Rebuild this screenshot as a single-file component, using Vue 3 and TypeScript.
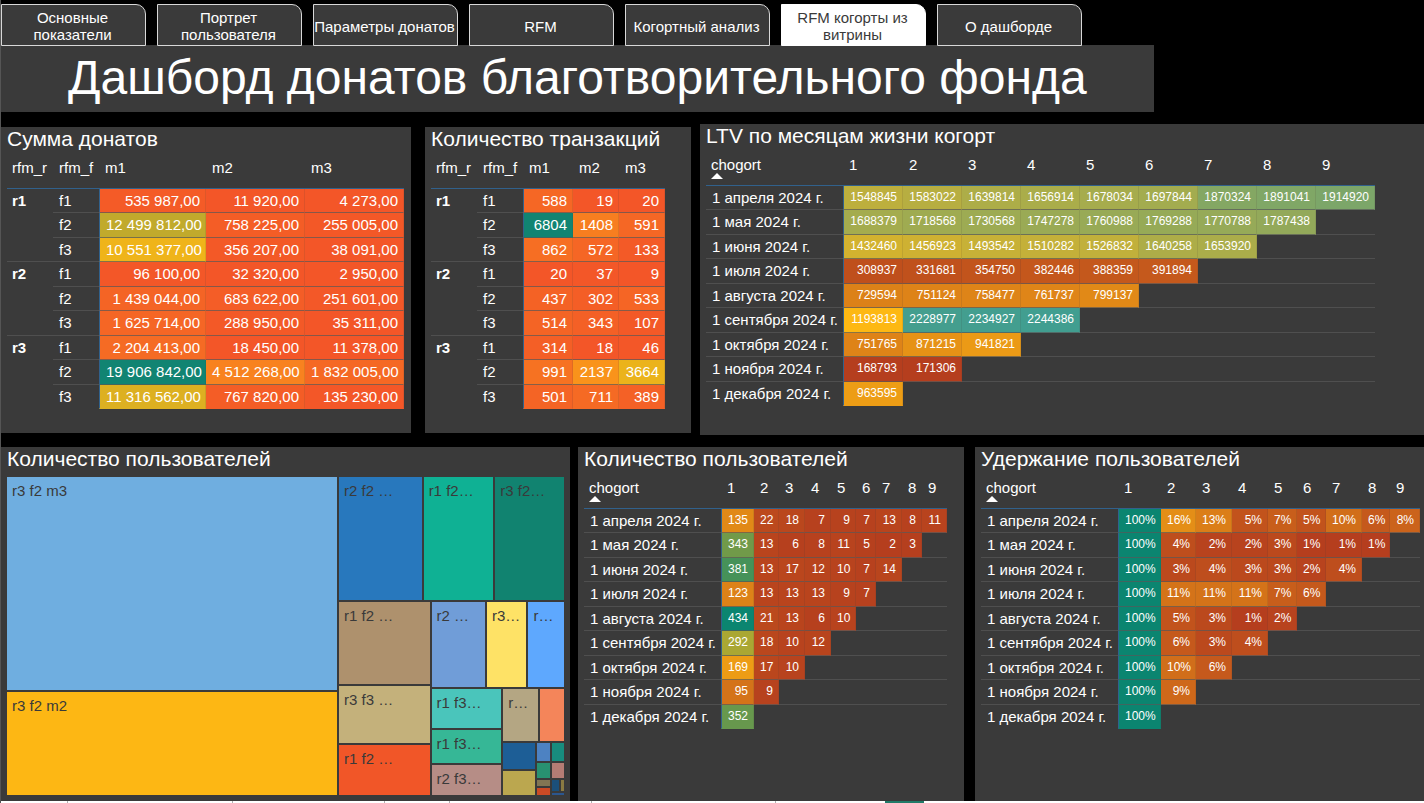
<script setup lang="ts">
import { h, type VNode } from 'vue'

type Rgb = [number, number, number]

interface Scale {
  min: number
  mid: number
  max: number
  low: Rgb
  center: Rgb
  high: Rgb
}

interface Matrix {
  title: string
  columns: string[]
  widths: number[]
  groups: { name: string; rows: { name: string; values: number[] }[] }[]
  scale: Scale
  digits: number
}

interface Cohort {
  id: string
  title: string
  widths: number[]
  rows: number[][]
  scale: Scale
  suffix: string
}

interface Tile {
  size: number
  color?: string
  label?: string
  dir?: 'row' | 'column'
  items?: Tile[]
}

const tabs = [
  'Основные показатели',
  'Портрет пользователя',
  'Параметры донатов',
  'RFM',
  'Когортный анализ',
  'RFM когорты из витрины',
  'О дашборде',
]
const activeTab = 5

const months = [
  '1 апреля 2024 г.',
  '1 мая 2024 г.',
  '1 июня 2024 г.',
  '1 июля 2024 г.',
  '1 августа 2024 г.',
  '1 сентября 2024 г.',
  '1 октября 2024 г.',
  '1 ноября 2024 г.',
  '1 декабря 2024 г.',
]

function group(name: string, f1: number[], f2: number[], f3: number[]) {
  return {
    name,
    rows: [
      { name: 'f1', values: f1 },
      { name: 'f2', values: f2 },
      { name: 'f3', values: f3 },
    ],
  }
}

const warm = { low: [243, 86, 40] as Rgb, center: [253, 183, 20] as Rgb, high: [17, 132, 114] as Rgb }
const deep = { low: [181, 62, 30] as Rgb, center: [253, 184, 19] as Rgb, high: [11, 133, 112] as Rgb }

const matrices: Matrix[] = [
  {
    title: 'Сумма донатов',
    columns: ['m1', 'm2', 'm3'],
    widths: [46, 46, 107, 99, 99],
    digits: 2,
    scale: { min: 2950, mid: 9954896, max: 19906842, ...warm },
    groups: [
      group('r1', [535987, 11920, 4273], [12499812, 758225, 255005], [10551377, 356207, 38091]),
      group('r2', [96100, 32320, 2950], [1439044, 683622, 251601], [1625714, 288950, 35311]),
      group('r3', [2204413, 18450, 11378], [19906842, 4512268, 1832005], [11316562, 767820, 135230]),
    ],
  },
  {
    title: 'Количество транзакций',
    columns: ['m1', 'm2', 'm3'],
    widths: [46, 46, 50, 46, 46],
    digits: 0,
    scale: { min: 9, mid: 3406, max: 6804, ...warm },
    groups: [
      group('r1', [588, 19, 20], [6804, 1408, 591], [862, 572, 133]),
      group('r2', [20, 37, 9], [437, 302, 533], [514, 343, 107]),
      group('r3', [314, 18, 46], [991, 2137, 3664], [501, 711, 389]),
    ],
  },
]

const ltv: Cohort = {
  id: 'ltv',
  title: 'LTV по месяцам жизни когорт',
  widths: [137, 60, 59, 59, 59, 59, 59, 59, 59, 59],
  suffix: '',
  scale: { min: 168793, mid: 1193813, max: 2244386, ...deep, high: [65, 158, 144] },
  rows: [
    [1548845, 1583022, 1639814, 1656914, 1678034, 1697844, 1870324, 1891041, 1914920],
    [1688379, 1718568, 1730568, 1747278, 1760988, 1769288, 1770788, 1787438],
    [1432460, 1456923, 1493542, 1510282, 1526832, 1640258, 1653920],
    [308937, 331681, 354750, 382446, 388359, 391894],
    [729594, 751124, 758477, 761737, 799137],
    [1193813, 2228977, 2234927, 2244386],
    [751765, 871215, 941821],
    [168793, 171306],
    [963595],
  ],
}

const users: Cohort = {
  id: 'users',
  title: 'Количество пользователей',
  widths: [137, 33, 25, 26, 26, 25, 20, 26, 20, 25],
  suffix: '',
  scale: { min: 2, mid: 218, max: 434, ...deep },
  rows: [
    [135, 22, 18, 7, 9, 7, 13, 8, 11],
    [343, 13, 6, 8, 11, 5, 2, 3],
    [381, 13, 17, 12, 10, 7, 14],
    [123, 13, 13, 13, 9, 7],
    [434, 21, 13, 6, 10],
    [292, 18, 10, 12],
    [169, 17, 10],
    [95, 9],
    [352],
  ],
}

const retention: Cohort = {
  id: 'retention',
  title: 'Удержание пользователей',
  widths: [137, 43, 35, 36, 36, 29, 29, 36, 28, 30],
  suffix: '%',
  scale: { min: 1, mid: 24, max: 100, ...deep },
  rows: [
    [100, 16, 13, 5, 7, 5, 10, 6, 8],
    [100, 4, 2, 2, 3, 1, 1, 1],
    [100, 3, 4, 3, 3, 2, 4],
    [100, 11, 11, 11, 7, 6],
    [100, 5, 3, 1, 2],
    [100, 6, 3, 4],
    [100, 10, 6],
    [100, 9],
    [100],
  ],
}

const sheetCells = [
  { size: 67 },
  { size: 165 },
  { size: 152 },
  { size: 65 },
  { size: 142 },
  { size: 184 },
  { size: 109, last: true },
  { size: 39, accent: true },
  { size: 500, last: true },
]

function heat(value: number, s: Scale): string {
  const lower = value <= s.mid
  const from = lower ? s.low : s.center
  const to = lower ? s.center : s.high
  const t = lower ? (value - s.min) / (s.mid - s.min) : (value - s.mid) / (s.max - s.mid)
  const rgb = from.map((c, i) => Math.round(c + (to[i] - c) * t))
  return `rgb(${rgb.join(', ')})`
}

function format(value: number, digits: number): string {
  if (digits === 0) return String(value)
  const whole = String(value).replace(/\B(?=(\d{3})+$)/g, '\u00a0')
  return `${whole},${'0'.repeat(digits)}`
}

const sum = (list: number[]) => list.reduce((a, b) => a + b, 0)

const treemap: Tile = {
  size: 1,
  dir: 'row',
  items: [
    {
      size: 330,
      dir: 'column',
      items: [
        { size: 213, color: '#6faee0', label: 'r3 f2 m3' },
        { size: 103, color: '#fdb714', label: 'r3 f2 m2' },
      ],
    },
    {
      size: 225,
      dir: 'column',
      items: [
        {
          size: 123,
          dir: 'row',
          items: [
            { size: 83, color: '#2878bd', label: 'r2 f2 …' },
            { size: 70, color: '#0fb194', label: 'r1 f2…' },
            { size: 69, color: '#118370', label: 'r3 f2…' },
          ],
        },
        {
          size: 192,
          dir: 'row',
          items: [
            {
              size: 91,
              dir: 'column',
              items: [
                { size: 82, color: '#ae916d', label: 'r1 f2 …' },
                { size: 57, color: '#c4b17b', label: 'r3 f3 …' },
                { size: 50, color: '#f15628', label: 'r1 f2 …' },
              ],
            },
            {
              size: 133,
              dir: 'column',
              items: [
                {
                  size: 84,
                  dir: 'row',
                  items: [
                    { size: 54, color: '#709dd8', label: 'r2 …' },
                    { size: 40, color: '#fee266', label: 'r3…' },
                    { size: 36, color: '#5ea8fe', label: 'r…' },
                  ],
                },
                {
                  size: 106,
                  dir: 'row',
                  items: [
                    {
                      size: 70,
                      dir: 'column',
                      items: [
                        { size: 39, color: '#4ac5bb', label: 'r1 f3…' },
                        { size: 33, color: '#36b796', label: 'r1 f3…' },
                        { size: 30, color: '#b68d86', label: 'r2 f3…' },
                      ],
                    },
                    {
                      size: 61,
                      dir: 'column',
                      items: [
                        {
                          size: 52,
                          dir: 'row',
                          items: [
                            { size: 35, color: '#b4a683', label: 'r…' },
                            { size: 25, color: '#f4855a' },
                          ],
                        },
                        {
                          size: 52,
                          dir: 'row',
                          items: [
                            {
                              size: 32,
                              dir: 'column',
                              items: [
                                { size: 26, color: '#1d5e96' },
                                { size: 24, color: '#bba74f' },
                              ],
                            },
                            {
                              size: 13,
                              dir: 'column',
                              items: [
                                { size: 18, color: '#4d82c2' },
                                { size: 15, color: '#289171' },
                                { size: 6, color: '#817553' },
                                { size: 7, color: '#cb4a25' },
                              ],
                            },
                            {
                              size: 12,
                              dir: 'column',
                              items: [
                                { size: 18, color: '#188c7e' },
                                { size: 15, color: '#b57c74' },
                                {
                                  size: 11,
                                  dir: 'row',
                                  items: [
                                    { size: 7, color: '#1b4f7a' },
                                    { size: 3, color: '#8a7a42' },
                                  ],
                                },
                                { size: 2, color: '#2b568f' },
                              ],
                            },
                          ],
                        },
                      ],
                    },
                  ],
                },
              ],
            },
          ],
        },
      ],
    },
  ],
}

function TreeNode(props: { tile: Tile }): VNode {
  const { tile } = props
  const style = { flexGrow: tile.size, backgroundColor: tile.color }
  if (tile.items) {
    return h(
      'div',
      { class: ['tree-group', `tree-${tile.dir}`], style },
      tile.items.map((item) => h(TreeNode, { tile: item })),
    )
  }
  return h('div', { class: 'tree-tile', style }, tile.label ? [h('span', tile.label)] : [])
}
TreeNode.props = ['tile']
</script>

<template>
  <div class="page">
    <nav class="tabs">
      <button v-for="(tab, i) in tabs" :key="tab" type="button" class="tab" :class="{ active: i === activeTab }">
        {{ tab }}
      </button>
    </nav>

    <header class="banner">
      <h1>Дашборд донатов благотворительного фонда</h1>
    </header>

    <main class="board">
      <div class="line line-top">
        <section v-for="(m, mi) in matrices" :key="m.title" class="panel" :class="mi ? 'panel-tx' : 'panel-sum'">
          <h2>{{ m.title }}</h2>
          <table class="grid" :style="{ width: sum(m.widths) + 'px' }">
            <colgroup>
              <col v-for="(w, i) in m.widths" :key="i" :style="{ width: w + 'px' }" />
            </colgroup>
            <thead>
              <tr>
                <th scope="col">rfm_r</th>
                <th scope="col">rfm_f</th>
                <th v-for="c in m.columns" :key="c" scope="col">{{ c }}</th>
              </tr>
            </thead>
            <tbody>
              <template v-for="(g, gi) in m.groups" :key="g.name">
                <tr v-for="(r, ri) in g.rows" :key="r.name">
                  <th
                    v-if="ri === 0"
                    scope="rowgroup"
                    :rowspan="g.rows.length"
                    class="group-name"
                    :class="{ 'group-last': gi === m.groups.length - 1 }"
                  >
                    {{ g.name }}
                  </th>
                  <th scope="row">{{ r.name }}</th>
                  <td
                    v-for="(v, vi) in r.values"
                    :key="vi"
                    class="value"
                    :class="{ first: vi === 0 }"
                    :style="{ backgroundColor: heat(v, m.scale) }"
                  >
                    {{ format(v, m.digits) }}
                  </td>
                </tr>
              </template>
            </tbody>
          </table>
        </section>

        <section v-for="c in [ltv]" :key="c.id" class="panel panel-ltv">
          <h2>{{ c.title }}</h2>
          <table class="grid cohort" :style="{ width: sum(c.widths) + 'px' }">
            <colgroup>
              <col v-for="(w, i) in c.widths" :key="i" :style="{ width: w + 'px' }" />
            </colgroup>
            <thead>
              <tr>
                <th scope="col" aria-sort="ascending" class="sorted">chogort</th>
                <th v-for="n in 9" :key="n" scope="col">{{ n }}</th>
              </tr>
            </thead>
            <tbody>
              <tr v-for="(row, ri) in c.rows" :key="ri">
                <th scope="row">{{ months[ri] }}</th>
                <template v-for="n in 9" :key="n">
                  <td
                    v-if="n <= row.length"
                    class="value small"
                    :class="{ first: n === 1 }"
                    :style="{ backgroundColor: heat(row[n - 1], c.scale) }"
                  >
                    {{ row[n - 1] }}{{ c.suffix }}
                  </td>
                  <td v-else></td>
                </template>
              </tr>
            </tbody>
          </table>
        </section>
      </div>

      <div class="line line-bottom">
        <section class="panel panel-tree">
          <h2>Количество пользователей</h2>
          <div class="treemap">
            <TreeNode :tile="treemap" />
          </div>
        </section>

        <section v-for="c in [users, retention]" :key="c.id" class="panel" :class="'panel-' + c.id">
          <h2>{{ c.title }}</h2>
          <table class="grid cohort" :style="{ width: sum(c.widths) + 'px' }">
            <colgroup>
              <col v-for="(w, i) in c.widths" :key="i" :style="{ width: w + 'px' }" />
            </colgroup>
            <thead>
              <tr>
                <th scope="col" aria-sort="ascending" class="sorted">chogort</th>
                <th v-for="n in 9" :key="n" scope="col">{{ n }}</th>
              </tr>
            </thead>
            <tbody>
              <tr v-for="(row, ri) in c.rows" :key="ri">
                <th scope="row">{{ months[ri] }}</th>
                <template v-for="n in 9" :key="n">
                  <td
                    v-if="n <= row.length"
                    class="value small"
                    :class="{ first: n === 1 }"
                    :style="{ backgroundColor: heat(row[n - 1], c.scale) }"
                  >
                    {{ row[n - 1] }}{{ c.suffix }}
                  </td>
                  <td v-else></td>
                </template>
              </tr>
            </tbody>
          </table>
        </section>
      </div>
    </main>

    <div class="sheet-edge">
      <span
        v-for="(cell, i) in sheetCells"
        :key="i"
        :class="{ accent: cell.accent, last: cell.last }"
        :style="{ flexGrow: cell.size }"
      ></span>
    </div>
  </div>
</template>

<style>
html,
body {
  background: #000;
}

.tree-group,
.tree-tile {
  display: flex;
  flex-basis: 0;
  min-width: 0;
  min-height: 0;
  box-sizing: border-box;
}

.tree-group {
  gap: 2px;
}

.tree-row {
  flex-direction: row;
}

.tree-column {
  flex-direction: column;
}

.tree-tile {
  overflow: hidden;
}

.tree-tile span {
  padding: 5px 0 0 5px;
  font-size: 15px;
  line-height: 18px;
  white-space: nowrap;
  color: #3a3a3a;
}
</style>

<style scoped>
.page {
  display: flex;
  flex-direction: column;
  box-sizing: border-box;
  min-height: 100vh;
  padding-top: 4px;
  border-left: 1px solid #555;
  background: #000;
  color: #fff;
  font-family: 'Liberation Sans', Arial, sans-serif;
  font-size: 15px;
}

.tabs {
  position: relative;
  z-index: 1;
  display: flex;
  gap: 11px;
  margin-bottom: -1px;
}

.tab {
  width: 145px;
  height: 42px;
  padding: 2px 2px 0 0;
  border: 1px solid #d8d8d8;
  border-radius: 0 10px 0 0;
  background: #3a3a3a;
  color: #fff;
  font: inherit;
  line-height: 17px;
}

.tab.active {
  border-color: #fff;
  background: #fff;
  color: #3a3a3a;
}

.banner {
  width: 81%;
  background: #3a3a3a;
}

.banner h1 {
  margin: 0;
  padding: 5px 0 6px;
  font-size: 48px;
  font-weight: 400;
  line-height: 56px;
  text-align: center;
  white-space: nowrap;
}

.board {
  display: flex;
  flex: 1;
  flex-direction: column;
  gap: 12px;
  padding-top: 12px;
}

.line {
  display: grid;
}

.line-top {
  grid-template-columns: minmax(0, 424fr) minmax(0, 275fr) minmax(0, 724fr);
}

.line-bottom {
  flex: 1;
  grid-template-columns: minmax(0, 577fr) minmax(0, 397fr) minmax(0, 449fr);
}

.panel {
  display: flex;
  flex-direction: column;
  box-sizing: border-box;
  min-width: 0;
  padding: 0 6px;
  background: #3a3a3a;
}

.panel-sum {
  margin: 3px 14px 2px 0;
  padding-bottom: 24px;
}

.panel-tx {
  margin: 3px 9px 2px 0;
  padding-bottom: 24px;
}

.panel-ltv {
  padding-bottom: 29px;
}

.panel-tree {
  margin-right: 8px;
}

.panel-users {
  margin-right: 11px;
}

h2 {
  margin: 0;
  font-size: 21px;
  font-weight: 400;
  line-height: 24px;
  white-space: nowrap;
}

.grid {
  table-layout: fixed;
  border-collapse: separate;
  border-spacing: 0;
  margin-top: 6px;
  white-space: nowrap;
}

.grid th,
.grid td {
  box-sizing: border-box;
  padding: 0 5px 0 6px;
  border-bottom: 1px solid rgba(88, 88, 88, 0.7);
  font-weight: 400;
  line-height: 20px;
  text-align: left;
}

.grid tr > :first-child {
  padding-left: 5px;
}

.grid tbody th[scope='row'] {
  padding-left: 6px;
}

.grid thead th {
  height: 32px;
  padding-top: 1px;
  border-bottom-color: #31618c;
  vertical-align: top;
}

.grid tbody tr {
  height: 25px;
}

.grid tbody tr:nth-child(odd) {
  height: 24px;
}

.grid tbody tr:last-child > *,
.grid tbody .group-last {
  border-bottom-color: transparent;
}

.grid .group-name {
  padding-top: 2px;
  font-weight: 700;
  vertical-align: top;
}

.grid .value {
  border-right: 1px solid rgba(58, 58, 58, 0.12);
  text-align: right;
}

.grid .first {
  border-left: 1px solid #31618c;
}

.grid .small {
  padding-bottom: 2px;
  font-size: 12px;
}

.sorted::after {
  display: block;
  width: 0;
  margin: -2px 0 0;
  border-right: 6px solid transparent;
  border-bottom: 6px solid #fff;
  border-left: 6px solid transparent;
  content: '';
}

.treemap {
  display: flex;
  flex: 1;
  margin: 6px 0;
}

.treemap > :deep(.tree-group) {
  flex: 1;
}

.sheet-edge {
  display: flex;
  height: 2px;
  background: #fff;
}

.sheet-edge span {
  flex-basis: 0;
  box-shadow: inset -1px 0 #b0b0b0;
}

.sheet-edge .last {
  box-shadow: none;
}

.sheet-edge .accent {
  background: #217a68;
  box-shadow: none;
}
</style>
